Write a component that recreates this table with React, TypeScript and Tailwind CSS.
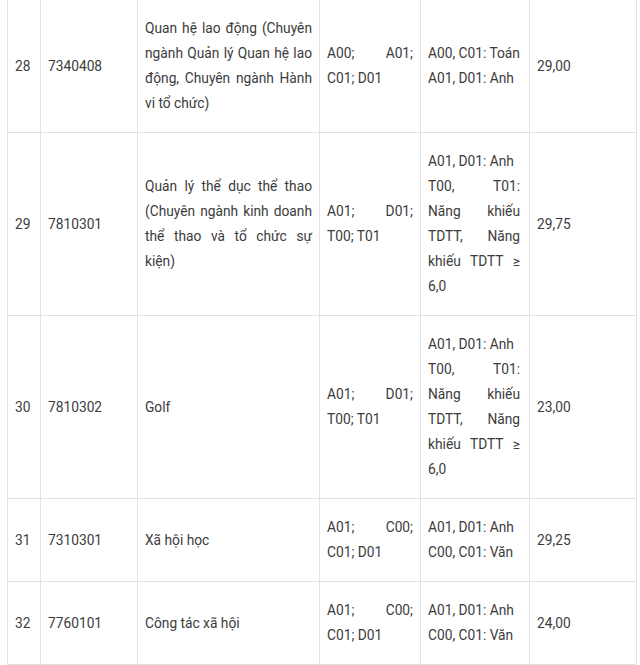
type Row = {
  stt: string;
  code: string;
  name: string;
  combos: string;
  subject: string[];
  score: string;
};

const rows: Row[] = [
  {
    stt: "28",
    code: "7340408",
    name: "Quan hệ lao động (Chuyên ngành Quản lý Quan hệ lao động, Chuyên ngành Hành vi tổ chức)",
    combos: "A00; A01; C01; D01",
    subject: ["A00, C01: Toán", "A01, D01: Anh"],
    score: "29,00",
  },
  {
    stt: "29",
    code: "7810301",
    name: "Quản lý thể dục thể thao (Chuyên ngành kinh doanh thể thao và tổ chức sự kiện)",
    combos: "A01; D01; T00; T01",
    subject: ["A01, D01: Anh", "T00, T01: Năng khiếu TDTT, Năng khiếu TDTT ≥ 6,0"],
    score: "29,75",
  },
  {
    stt: "30",
    code: "7810302",
    name: "Golf",
    combos: "A01; D01; T00; T01",
    subject: ["A01, D01: Anh", "T00, T01: Năng khiếu TDTT, Năng khiếu TDTT ≥ 6,0"],
    score: "23,00",
  },
  {
    stt: "31",
    code: "7310301",
    name: "Xã hội học",
    combos: "A01; C00; C01; D01",
    subject: ["A01, D01: Anh", "C00, C01: Văn"],
    score: "29,25",
  },
  {
    stt: "32",
    code: "7760101",
    name: "Công tác xã hội",
    combos: "A01; C00; C01; D01",
    subject: ["A01, D01: Anh", "C00, C01: Văn"],
    score: "24,00",
  },
];

const cell = "border border-[#e2e2e2] px-[7px] py-4 align-middle text-justify";

export default function App() {
  return (
    <div
      className="h-[665px] w-[640px] overflow-hidden bg-white text-[13.75px] leading-[25px] text-[#3c3c3c]"
      style={{ fontFamily: "Roboto, 'Noto Sans', sans-serif" }}
    >
      <table className="ml-[7px] w-[629px] table-fixed border-collapse">
        <colgroup>
          <col className="w-[33px]" />
          <col className="w-[97px]" />
          <col className="w-[182px]" />
          <col className="w-[101px]" />
          <col className="w-[109px]" />
          <col className="w-[107px]" />
        </colgroup>
        <tbody>
          {rows.map((r, i) => (
            <tr key={r.stt} className={i === 0 ? "[&>td]:border-t-0" : ""}>
              <td className={cell}>{r.stt}</td>
              <td className={cell}>{r.code}</td>
              <td className={cell}>{r.name}</td>
              <td className={cell}>{r.combos}</td>
              <td className={`${cell} pr-[9px]`}>
                {r.subject.map((s, j) => (
                  <div key={s} className={j === 0 ? "whitespace-nowrap" : ""}>
                    {s}
                  </div>
                ))}
              </td>
              <td className={cell}>{r.score}</td>
            </tr>
          ))}
          <tr>
            <td className={cell}>&nbsp;</td>
            <td className={cell}></td>
            <td className={cell}></td>
            <td className={cell}></td>
            <td className={cell}></td>
            <td className={cell}></td>
          </tr>
        </tbody>
      </table>
    </div>
  );
}
